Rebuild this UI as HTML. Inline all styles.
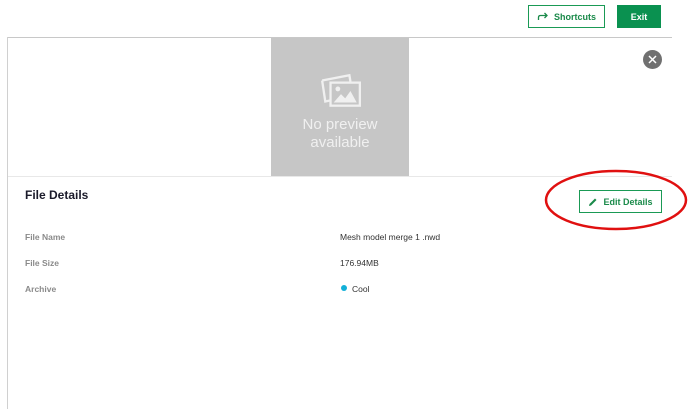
<!DOCTYPE html>
<html><head><style>
*{margin:0;padding:0;box-sizing:border-box}
body{width:688px;height:409px;background:#fff;font-family:"Liberation Sans",sans-serif;position:relative;overflow:hidden}
.a{position:absolute}
.btn{position:absolute;border:1px solid #1a9a55;color:#1a8a4a;font-size:9px;font-weight:bold;display:flex;align-items:center;justify-content:center;background:#fff}
.lbl{position:absolute;left:25px;font-size:8.5px;color:#8a8a8a;font-weight:bold}
.val{position:absolute;left:340px;font-size:8.5px;color:#333}
</style></head><body>
<div class="btn" style="left:528px;top:5px;width:77px;height:23px"><svg width="12" height="9" viewBox="0 0 12 9" style="margin-right:5px"><path d="M1.5 8V5.5Q1.5 3.5 3.5 3.5H10M7.5 1L10 3.5 7.5 6" fill="none" stroke="#1a8a4a" stroke-width="1.3"/></svg>Shortcuts</div>
<div class="btn" style="left:617px;top:5px;width:44px;height:23px;background:#0a9150;color:#fff;border-color:#0a9150">Exit</div>
<div class="a" style="left:8px;top:37px;width:664px;height:1px;background:#c8c8c8"></div>
<div class="a" style="left:7px;top:37px;width:1px;height:372px;background:#d0d0d0"></div>
<div class="a" style="left:8px;top:176px;width:664px;height:1px;background:#e8e8e8"></div>
<div class="a" style="left:271px;top:38px;width:138px;height:138px;background:#c6c6c6;color:#f0f0f0;text-align:center">
<svg class="a" style="left:48px;top:34px" width="44" height="38" viewBox="0 0 42 36"><g fill="none" stroke="#f0f0f0" stroke-width="2.2"><path d="M3 8L29 3 30 9"/><path d="M3 8L6 28 11 27"/><rect x="11" y="10" width="28" height="22"/></g><circle cx="18" cy="16" r="2.3" fill="#f0f0f0"/><path d="M14 29L21 21 25 25 30 18 36 29Z" fill="#f0f0f0"/></svg>
<div class="a" style="left:0;top:78px;width:138px;font-size:15px;line-height:18px">No preview<br>available</div>
</div>
<div class="a" style="left:643px;top:50px;width:19px;height:19px;border-radius:50%;background:#707070"><svg width="19" height="19"><path d="M6 6L13 13M13 6L6 13" stroke="#fff" stroke-width="1.5"/></svg></div>
<div class="a" style="left:25px;top:188px;font-size:12px;font-weight:bold;color:#1a1a2a">File Details</div>
<div class="btn" style="left:579px;top:190px;width:83px;height:23px"><svg width="10" height="10" viewBox="0 0 10 10" style="margin-right:5px"><path d="M1 9L1.5 7 7 1.5 8.5 3 3 8.5Z" fill="#1a8a4a"/></svg>Edit Details</div>
<svg class="a" style="left:540px;top:164px" width="148" height="72"><ellipse cx="76" cy="36" rx="70" ry="29" fill="none" stroke="#e01010" stroke-width="2.5"/></svg>
<div class="lbl" style="top:232px">File Name</div><div class="val" style="top:232px">Mesh model merge 1 .nwd</div>
<div class="lbl" style="top:258px">File Size</div><div class="val" style="top:258px">176.94MB</div>
<div class="lbl" style="top:284px">Archive</div>
<div class="a" style="left:341px;top:285px;width:6px;height:6px;border-radius:50%;background:#12b0d8"></div>
<div class="val" style="left:352px;top:284px">Cool</div>
</body></html>
